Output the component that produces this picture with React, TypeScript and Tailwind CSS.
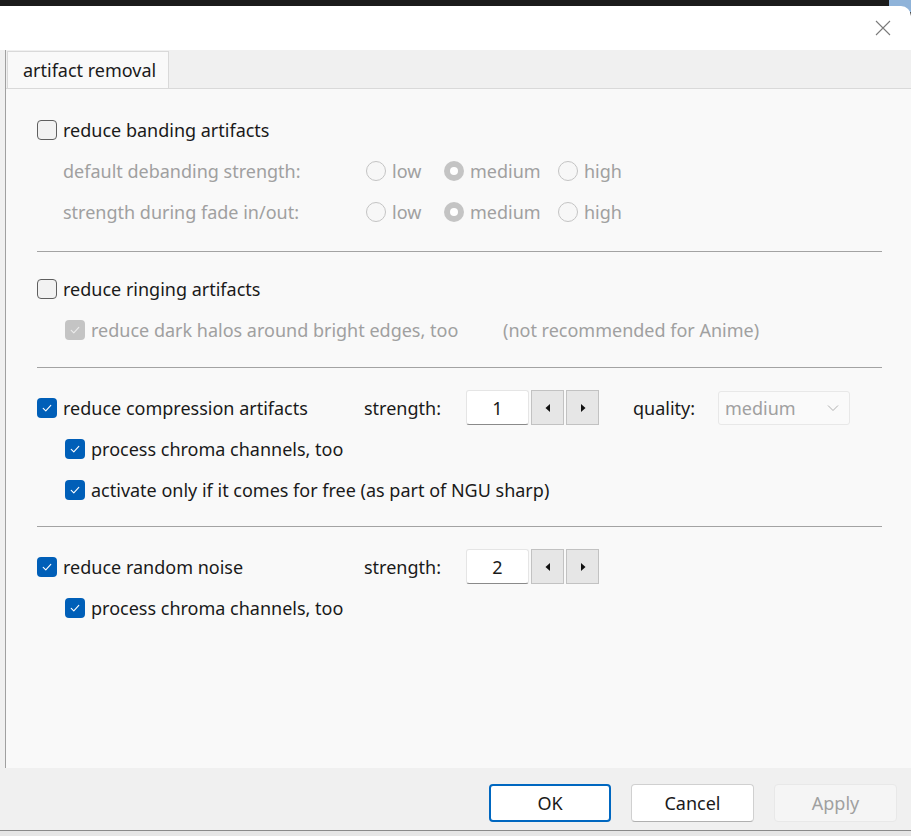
import React from "react";

const font = { fontFamily: '"Noto Sans", "Open Sans", "Liberation Sans", sans-serif' };

function Check({ checked, disabled }: { checked?: boolean; disabled?: boolean }) {
  if (checked) {
    return (
      <span
        className={`flex h-[20px] w-[20px] shrink-0 items-center justify-center rounded-[4px] ${
          disabled ? "bg-[#c4c4c4]" : "bg-[#005fb8]"
        }`}
      >
        <svg width="12" height="12" viewBox="0 0 12 12" fill="none">
          <path d="M2.2 6.3 L4.8 8.8 L9.8 3.4" stroke={disabled ? "#ececec" : "#ffffff"} strokeWidth="1.1" strokeLinecap="round" strokeLinejoin="round" />
        </svg>
      </span>
    );
  }
  return <span className="h-[20px] w-[20px] shrink-0 rounded-[4px] border border-[#5f5f5f] bg-[#f2f2f2]" />;
}

function Radio({ selected, label }: { selected?: boolean; label: string }) {
  return (
    <div className="flex items-center gap-[6px]">
      {selected ? (
        <span className="flex h-[20px] w-[20px] items-center justify-center rounded-full bg-[#c4c4c4]">
          <span className="h-[8px] w-[8px] rounded-full bg-white" />
        </span>
      ) : (
        <span className="h-[20px] w-[20px] rounded-full border border-[#c4c4c4] bg-[#f7f7f7]" />
      )}
      <span className="text-[#a0a0a0]">{label}</span>
    </div>
  );
}

function Spin({ value }: { value: string }) {
  return (
    <div className="flex items-center">
      <div className="flex h-[35px] w-[63px] items-center justify-center rounded-[3px] border border-[#e5e5e5] border-b-[#8a8a8a] bg-white text-[#1a1a1a]">
        {value}
      </div>
      <div className="ml-[2px] flex h-[35px] w-[33px] items-center justify-center border border-[#c2c2c2] bg-[#e6e6e6]">
        <svg width="6" height="8" viewBox="0 0 6 8"><path d="M5 0 L0.5 4 L5 8 Z" fill="#111" /></svg>
      </div>
      <div className="ml-[2px] flex h-[35px] w-[33px] items-center justify-center border border-[#c2c2c2] bg-[#e6e6e6]">
        <svg width="6" height="8" viewBox="0 0 6 8"><path d="M1 0 L5.5 4 L1 8 Z" fill="#111" /></svg>
      </div>
    </div>
  );
}

function CheckRow({ checked, disabled, label, indent }: { checked?: boolean; disabled?: boolean; label: string; indent?: boolean }) {
  return (
    <div className={`flex items-center gap-[6px] ${indent ? "ml-[28px]" : ""}`}>
      <Check checked={checked} disabled={disabled} />
      <span className={disabled ? "text-[#a0a0a0]" : "text-[#1a1a1a]"}>{label}</span>
    </div>
  );
}

function Sep({ mt, mb }: { mt: string; mb: string }) {
  return <div className={`${mt} ${mb} h-px w-[845px] bg-[#a3a3a3]`} />;
}

export default function App() {
  return (
    <div className="h-[836px] w-[911px] overflow-hidden bg-[#1b1b1b] text-[18px] leading-[26px]" style={font}>
      <div className="relative h-[6px] w-full">
        <div className="absolute right-0 top-0 h-[12px] w-[22px] bg-[#8fb3d9]" />
      </div>
      <div className="relative flex h-[44px] items-center justify-end rounded-tr-[10px] bg-white pr-[20px]">
        <svg width="16" height="16" viewBox="0 0 16 16" fill="none">
          <path d="M1 1 L15 15 M15 1 L1 15" stroke="#7a7a7a" strokeWidth="1.1" />
        </svg>
      </div>
      <div className="flex h-[780px] flex-col bg-[#f0f0f0]">
        <div className="ml-[5px] flex h-[718px] flex-col border-l border-[#a0a0a0]">
          <div className="flex h-[38px] items-end pt-[2px]">
            <div className="ml-[1px] flex h-[37px] w-[162px] items-center border border-b-0 border-[#d9d9d9] bg-[#f9f9f9] pl-[15px] text-[#1a1a1a]">
              artifact removal
            </div>
          </div>
          <div className="flex flex-1 flex-col border-t border-[#d9d9d9] bg-[#f9f9f9] pl-[31px] pt-[20px]">
            <div className="flex h-[41px] items-center">
              <CheckRow label="reduce banding artifacts" />
            </div>
            <div className="flex h-[41px] items-center">
              <span className="ml-[26px] w-[303px] text-[#a0a0a0]">default debanding strength:</span>
              <div className="flex items-center">
                <div className="w-[78px]"><Radio label="low" /></div>
                <div className="w-[114px]"><Radio label="medium" selected /></div>
                <Radio label="high" />
              </div>
            </div>
            <div className="flex h-[41px] items-center">
              <span className="ml-[26px] w-[303px] text-[#a0a0a0]">strength during fade in/out:</span>
              <div className="flex items-center">
                <div className="w-[78px]"><Radio label="low" /></div>
                <div className="w-[114px]"><Radio label="medium" selected /></div>
                <Radio label="high" />
              </div>
            </div>
            <Sep mt="mt-[19px]" mb="mb-[16px]" />
            <div className="flex h-[41px] items-center">
              <CheckRow label="reduce ringing artifacts" />
            </div>
            <div className="flex h-[41px] items-center">
              <div className="w-[466px]">
                <CheckRow indent checked disabled label="reduce dark halos around bright edges, too" />
              </div>
              <span className="text-[#a0a0a0]">(not recommended for Anime)</span>
            </div>
            <Sep mt="mt-[17px]" mb="mb-[19px]" />
            <div className="flex h-[41px] items-center">
              <div className="w-[327px]">
                <CheckRow checked label="reduce compression artifacts" />
              </div>
              <span className="w-[102px] text-[#1a1a1a]">strength:</span>
              <Spin value="1" />
              <span className="ml-[34px] w-[85px] text-[#1a1a1a]">quality:</span>
              <div className="flex h-[34px] w-[132px] items-center justify-between rounded-[3px] border border-[#e8e8e8] bg-[#fafafa] pl-[6px] pr-[10px] text-[#a0a0a0]">
                <span>medium</span>
                <svg width="12" height="8" viewBox="0 0 12 8" fill="none"><path d="M1 1.5 L6 6.5 L11 1.5" stroke="#b0b0b0" strokeWidth="1" /></svg>
              </div>
            </div>
            <div className="flex h-[41px] items-center">
              <CheckRow indent checked label="process chroma channels, too" />
            </div>
            <div className="flex h-[41px] items-center">
              <CheckRow indent checked label="activate only if it comes for free (as part of NGU sharp)" />
            </div>
            <Sep mt="mt-[16px]" mb="mb-[19px]" />
            <div className="flex h-[41px] items-center">
              <div className="w-[327px]">
                <CheckRow checked label="reduce random noise" />
              </div>
              <span className="w-[102px] text-[#1a1a1a]">strength:</span>
              <Spin value="2" />
            </div>
            <div className="flex h-[41px] items-center">
              <CheckRow indent checked label="process chroma channels, too" />
            </div>
          </div>
        </div>
        <div className="flex h-[62px] items-start justify-end gap-[20px] pr-[14px] pt-[16px]">
          <button className="h-[38px] w-[122px] rounded-[4px] border-2 border-[#0067c0] bg-white text-[#1a1a1a]">OK</button>
          <button className="h-[38px] w-[123px] rounded-[4px] border border-[#d0d0d0] border-b-[#b0b0b0] bg-white text-[#1a1a1a]">Cancel</button>
          <button className="h-[38px] w-[123px] rounded-[4px] border border-[#e8e8e8] bg-[#f5f5f5] text-[#a0a0a0]">Apply</button>
        </div>
      </div>
      <div className="h-[6px] border-t border-[#8a8a8a] bg-[#e6e6e6]" />
    </div>
  );
}
